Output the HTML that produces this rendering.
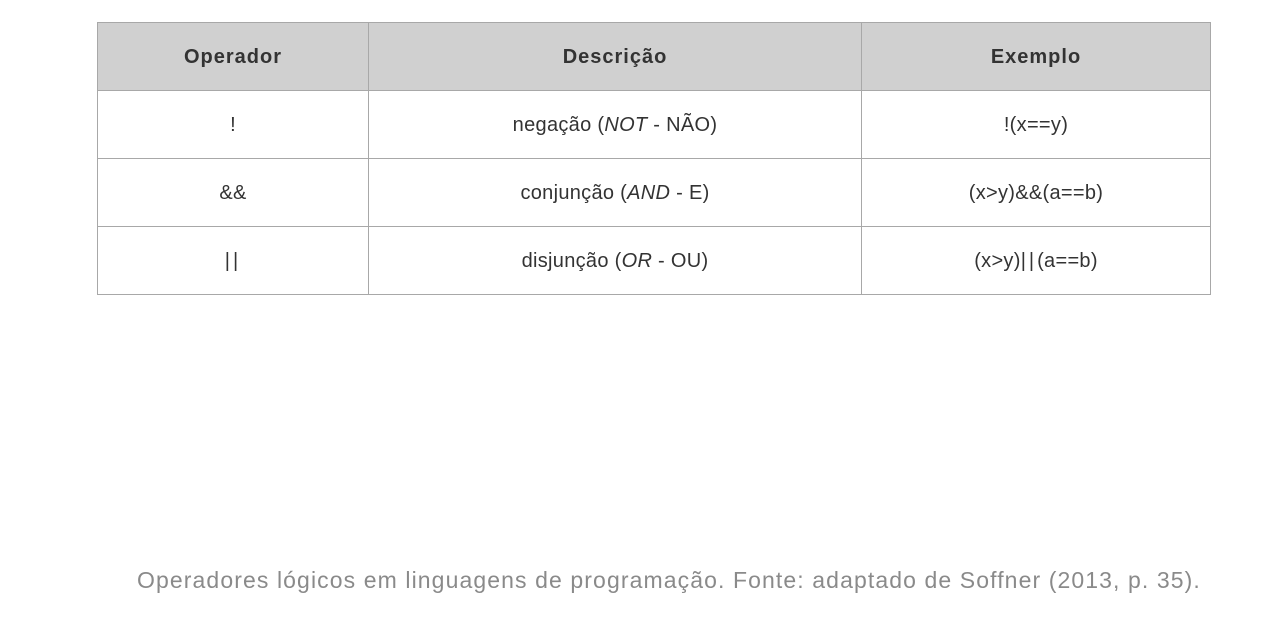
<!DOCTYPE html>
<html><head><meta charset="utf-8"><style>
body{margin:0;background:#fff;width:1268px;height:628px;position:relative;overflow:hidden;font-family:"Liberation Sans",sans-serif;}
table{position:absolute;left:97px;top:22px;border-collapse:collapse;color:#333;font-size:20px;letter-spacing:0.3px;}
td,th{border:1px solid #a8a8a8;text-align:center;padding:2px 0 0 0;height:65px;}
th{background:#d0d0d0;font-weight:bold;letter-spacing:1px;}
.p{letter-spacing:3px;}
.cap{position:absolute;left:137px;top:567px;font-size:23px;color:#8a8a8a;letter-spacing:1.1px;white-space:nowrap;}
</style></head><body>
<table>
<tr><th style="width:270px">Operador</th><th style="width:492px">Descrição</th><th style="width:348px">Exemplo</th></tr>
<tr><td>!</td><td>negação (<i>NOT</i> - NÃO)</td><td>!(x==y)</td></tr>
<tr><td>&amp;&amp;</td><td>conjunção (<i>AND</i> - E)</td><td>(x&gt;y)&amp;&amp;(a==b)</td></tr>
<tr><td><span class="p">||</span></td><td>disjunção (<i>OR</i> - OU)</td><td>(x&gt;y)<span class="p">||</span>(a==b)</td></tr>
</table>
<div class="cap">Operadores lógicos em linguagens de programação. Fonte: adaptado de Soffner (2013, p. 35).</div>
</body></html>
